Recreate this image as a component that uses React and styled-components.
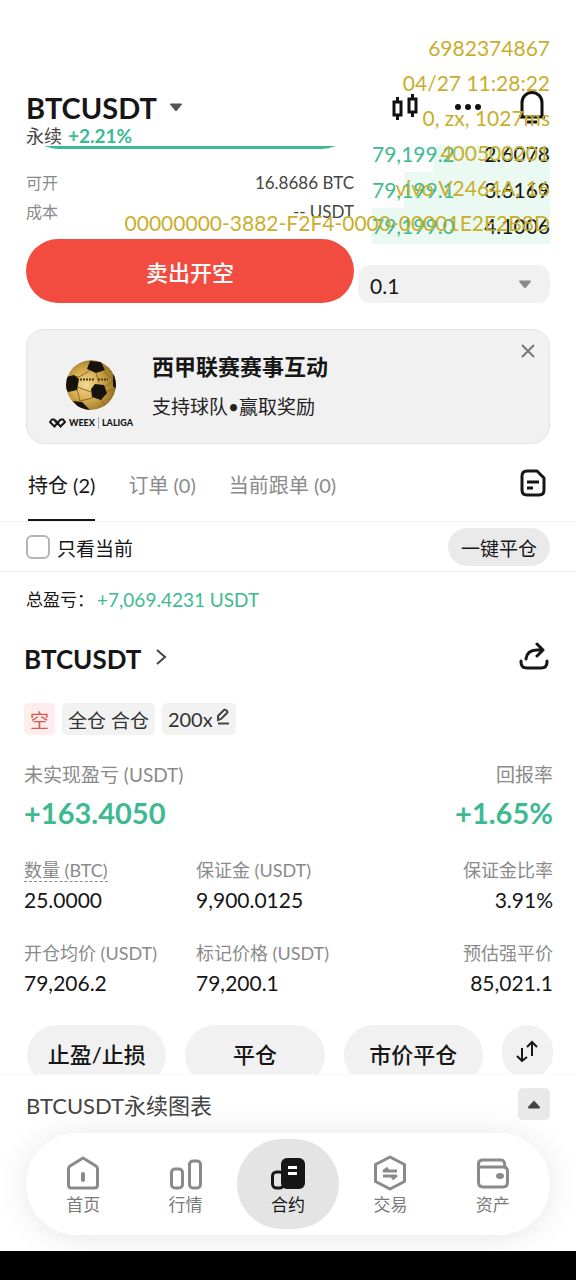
import { useState } from "react";
import styled, { createGlobalStyle } from "styled-components";

const GlobalStyle = createGlobalStyle`
  * {
    box-sizing: border-box;
  }
  body {
    margin: 0;
    background: #fff;
    font-family: Lato, "Noto Sans CJK SC", sans-serif;
    color: #161616;
  }
  button, select, input {
    font-family: inherit;
    color: inherit;
  }
  button {
    border: none;
    padding: 0;
    background: none;
    cursor: pointer;
  }
  svg {
    display: block;
  }
`;

const Page = styled.div`
  position: relative;
  display: flex;
  flex-direction: column;
  min-height: 100vh;
`;

const Header = styled.header`
  padding: 88px 26px 0;
`;

const HeaderRow = styled.div`
  display: flex;
  align-items: center;
  justify-content: space-between;
  height: 38px;
`;

const PairButton = styled.button`
  display: flex;
  align-items: center;
  gap: 12px;
  font-size: 29px;
  font-weight: 700;
`;

const HeaderTools = styled.div`
  display: flex;
  align-items: center;
  gap: 36px;
  padding-right: 4px;
`;

const SubRow = styled.div`
  display: flex;
  gap: 6px;
  height: 20px;
  line-height: 20px;
  font-size: 18px;
  color: #444;
`;

const Change = styled.span`
  font-size: 19px;
  font-weight: 700;
  color: #3dba92;
`;

const Watermark = styled.div`
  position: absolute;
  top: 30px;
  right: 26px;
  font-size: 21px;
  line-height: 35px;
  text-align: right;
  color: #c9ae2c;
  pointer-events: none;
`;

const Sheet = styled.main`
  flex: none;
`;

const Trade = styled.section`
  display: grid;
  grid-template-columns: 328fr 192fr;
  column-gap: 4px;
  padding: 0 26px;
`;

const OrderForm = styled.div`
  display: flex;
  flex-direction: column;
`;

// the buy button is scrolled up under the header, only its lower edge shows
const ScrolledOut = styled.div`
  display: flex;
  flex-direction: column;
  justify-content: flex-end;
  height: 3px;
  margin-bottom: 20px;
  overflow: hidden;
`;

const OrderButton = styled.button`
  flex: none;
  height: 64px;
  border-radius: 32px;
  font-size: 22px;
  font-weight: 500;
  color: #fff;
  background: ${({ $side }) => ($side === "buy" ? "#3dba92" : "#f24b40")};
`;

const FormLine = styled.div`
  display: flex;
  justify-content: space-between;
  height: 29px;
  line-height: 28px;
  font-size: 16px;
  color: #8a8a8a;
  &:last-of-type {
    margin-bottom: 12px;
  }
`;

const FormValue = styled.span`
  font-size: 17px;
  color: #444;
`;

const Book = styled.div`
  margin-top: -10px;
`;

const BookRow = styled.div`
  display: flex;
  justify-content: space-between;
  height: 36px;
  line-height: 36px;
  margin-left: 14px;
  font-size: 21px;
  background: linear-gradient(#eafaf2, #eafaf2) right bottom / ${({ $depth }) => $depth}% 100% no-repeat;
  &:first-child {
    background-size: ${({ $depth }) => $depth}% 26px;
  }
`;

const Price = styled.span`
  color: #3dba92;
`;

const StepBox = styled.div`
  display: flex;
  align-items: center;
  margin-top: 21px;
  height: 38px;
  padding-right: 18px;
  border-radius: 12px;
  background: #f1f1f1;
`;

const StepSelect = styled.select`
  flex: 1;
  min-width: 0;
  height: 38px;
  padding: 2px 0 0 12px;
  border: none;
  appearance: none;
  background: transparent;
  font-size: 21px;
`;

const Banner = styled.section`
  display: flex;
  align-items: flex-start;
  height: 115px;
  margin: 26px 26px 0;
  padding-left: 23px;
  border: 1px solid #e4e4e4;
  border-radius: 18px;
  background: #f1f1f1;
`;

const Sponsor = styled.div`
  display: flex;
  flex-direction: column;
  align-items: center;
  gap: 5px;
  width: 82px;
  padding-top: 29px;
`;

const SponsorNames = styled.div`
  display: flex;
  align-items: center;
  gap: 3px;
  font-size: 9px;
  line-height: 14px;
  font-weight: 900;
`;

const SponsorSplit = styled.i`
  width: 1px;
  height: 12px;
  background: #aaa;
`;

const BannerText = styled.div`
  flex: 1;
  padding: 18px 0 0 20px;
`;

const BannerTitle = styled.h2`
  margin: 0;
  font-size: 22px;
  line-height: 38px;
  font-weight: 700;
`;

const BannerSub = styled.p`
  margin: 0;
  font-size: 19px;
  line-height: 42px;
  color: #222;
`;

const CloseButton = styled.button`
  padding: 14px 14px 0 0;
`;

const Tabs = styled.nav`
  display: flex;
  align-items: center;
  gap: 33px;
  height: 78px;
  padding: 0 28px;
  border-bottom: 1px solid #f1f1f1;
`;

const Tab = styled.button`
  height: 77px;
  padding-top: 6px;
  font-size: 20px;
  color: ${({ $active }) => ($active ? "#161616" : "#8a8a8a")};
  border-bottom: 2px solid ${({ $active }) => ($active ? "#161616" : "transparent")};
`;

const HistoryButton = styled.button`
  margin-left: auto;
`;

const Filter = styled.div`
  display: flex;
  align-items: center;
  height: 50px;
  padding: 0 26px;
  border-bottom: 1px solid #f1f1f1;
`;

const CheckBox = styled.input`
  width: 24px;
  height: 24px;
  margin: 0 7px 0 0;
  border: 2px solid #b5b5b5;
  border-radius: 6px;
  appearance: none;
  &:checked {
    background: #161616;
  }
`;

const CheckLabel = styled.label`
  padding-top: 2px;
  font-size: 19px;
`;

const CloseAll = styled.button`
  width: 102px;
  height: 38px;
  margin-left: auto;
  padding-top: 2px;
  border-radius: 19px;
  font-size: 19px;
  background: #eaeaea;
`;

const Total = styled.p`
  display: flex;
  gap: 3px;
  margin: 0;
  padding: 0 26px;
  font-size: 17px;
  line-height: 56px;
`;

const TotalValue = styled.span`
  font-size: 19px;
  color: #3dba92;
`;

const Position = styled.section`
  padding: 12px 23px 0 24px;
`;

const PositionHead = styled.div`
  display: flex;
  align-items: center;
  justify-content: space-between;
  height: 38px;
  padding-right: 4px;
`;

const PositionName = styled.a`
  display: flex;
  align-items: center;
  gap: 14px;
  font-size: 26px;
  font-weight: 700;
  color: inherit;
  text-decoration: none;
`;

const Tags = styled.div`
  display: flex;
  gap: 7px;
  margin-top: 25px;
`;

const Tag = styled.span`
  display: flex;
  align-items: center;
  height: 32px;
  padding: 0 6px;
  border-radius: 5px;
  font-size: 19px;
  color: ${({ $short }) => ($short ? "#e5534b" : "#333")};
  background: ${({ $short }) => ($short ? "#fdeeed" : "#f2f2f2")};
`;

const EditButton = styled.button`
  display: flex;
  align-items: center;
  gap: 3px;
  font-size: 20px;
`;

const Summary = styled.div`
  display: flex;
  justify-content: space-between;
  margin-top: 26px;
`;

const Cell = styled.div`
  text-align: ${({ $end }) => ($end ? "right" : "left")};
`;

const SummaryLabel = styled.div`
  font-size: 19px;
  line-height: 28px;
  color: #8a8a8a;
`;

const SummaryValue = styled.div`
  font-size: 29px;
  font-weight: 700;
  line-height: 48px;
  color: #3dba92;
`;

const Stats = styled.div`
  display: grid;
  grid-template-columns: 172fr 200fr 157fr;
  row-gap: 23px;
  margin-top: 18px;
`;

const StatLabel = styled.div`
  font-size: 18px;
  line-height: 30px;
  color: #8a8a8a;
`;

const Hint = styled.span`
  display: inline-block;
  line-height: 22px;
  border-bottom: 1px dashed #8a8a8a;
`;

const StatValue = styled.div`
  font-size: 21px;
  line-height: 30px;
`;

const Actions = styled.div`
  display: grid;
  grid-template-columns: 1fr 1fr 1fr 51px;
  column-gap: 19px;
  height: 49px;
  margin-top: 27px;
  padding-left: 3px;
  overflow: hidden;
`;

const Action = styled.button`
  height: 60px;
  padding-bottom: 4px;
  border-radius: 30px;
  font-size: 22px;
  font-weight: 500;
  background: #f1f1f1;
`;

const SwapAction = styled(Action)`
  display: grid;
  place-items: center;
  height: 54px;
  padding: 0;
`;

const ChartBar = styled.div`
  display: flex;
  align-items: center;
  justify-content: space-between;
  height: 59px;
  padding: 0 26px;
  border-top: 1px solid #f8f8f8;
  font-size: 22px;
  color: #444;
`;

const ExpandButton = styled.button`
  display: grid;
  place-items: center;
  width: 32px;
  height: 32px;
  border-radius: 5px;
  background: #e9e9e9;
`;

const NavBar = styled.nav`
  display: grid;
  grid-template-columns: repeat(5, 1fr);
  margin: 0 26px 16px;
  padding: 6px;
  border-radius: 51px;
  background: #fff;
  box-shadow: 0 2px 32px rgba(0, 0, 0, 0.1);
`;

const NavItem = styled.a`
  display: flex;
  flex-direction: column;
  align-items: center;
  gap: 2px;
  height: 90px;
  padding-top: 16px;
  border-radius: 45px;
  font-size: 17px;
  line-height: 24px;
  text-decoration: none;
  color: ${({ $active }) => ($active ? "#161616" : "#7a7a7a")};
  background: ${({ $active }) => ($active ? "#e4e4e4" : "transparent")};
`;

const SystemBar = styled.div`
  flex: 1;
  min-height: 29px;
  background: #000;
`;

const Caret = ({ up, color }) => (
  <svg width="14" height="9" viewBox="0 0 14 9" fill={color}>
    <path d={up ? "M7 0.5L13 7Q13 8.5 12 8.5H2Q1 8.5 1 7Z" : "M1 1.5Q1 0.5 2 0.5H12Q13 0.5 13 1.5L8 7.6Q7 8.6 6 7.6Z"} />
  </svg>
);

const CandleIcon = () => (
  <svg width="26" height="28" viewBox="0 0 26 28" fill="none" stroke="#111" strokeWidth="3">
    <path d="M2 9H9V22H2ZM5.5 4V9M5.5 22V27M17 6H24V19H17ZM20.5 1V6M20.5 19V24" />
  </svg>
);

const MoreIcon = () => (
  <svg width="28" height="8" viewBox="0 0 28 8" fill="#111">
    <circle cx="4" cy="4" r="3" />
    <circle cx="14" cy="4" r="3" />
    <circle cx="24" cy="4" r="3" />
  </svg>
);

const BellIcon = () => (
  <svg width="28" height="34" viewBox="0 0 28 34" fill="none" stroke="#111" strokeWidth="3">
    <path d="M4 27V12.500a10 10 0 0 1 20 0V27" />
    <path d="M1 27H27" />
    <path d="M9 32H19" />
  </svg>
);

const BallIcon = () => (
  <svg width="52" height="52" viewBox="0 0 52 52">
    <defs>
      <radialGradient id="gold" cx="0.4" cy="0.5" r="0.62">
        <stop offset="0" stopColor="#f3dc94" />
        <stop offset="0.5" stopColor="#d3aa4e" />
        <stop offset="1" stopColor="#8f6a20" />
      </radialGradient>
      <clipPath id="ball">
        <circle cx="26" cy="26" r="25" />
      </clipPath>
    </defs>
    <g clipPath="url(#ball)">
      <circle cx="26" cy="26" r="25" fill="url(#gold)" />
      <path
        d="M24 12L14 18M12 28L26 33M39 13L47 20M31 14L34 24M12 30L15 42L28 39M42 32L50 30M36 40L40 46M14 18L8 17M48 22L40 28"
        fill="none"
        stroke="#8d6a24"
        strokeWidth="1"
      />
      <g fill="#17130c">
        <path d="M25 2L36 3L40 11L31 14L22 10Z" />
        <path d="M1 18L9 16L14 20L12 31L3 33L0 28Z" />
        <path d="M30 25L39 26L42 34L36 41L27 38L26 30Z" />
        <path d="M8 42L17 43L25 51L17 53Z" />
        <path d="M48 15L53 20V32L48 27Z" />
      </g>
      <path d="M15 20.500H29M33 20.500H43" stroke="#4a3812" strokeWidth="2" strokeDasharray="2 1" />
    </g>
  </svg>
);

const WeexIcon = () => (
  <svg width="17" height="10" viewBox="0 0 17 10" fill="none" stroke="#161616" strokeWidth="2">
    <path d="M8.5 6L5 1.5H3L1 4L5.5 8.5L11 2L12 1.5H14L16 4L11.5 8.5L6 2" />
  </svg>
);

const CloseIcon = () => (
  <svg width="14" height="14" viewBox="0 0 14 14" stroke="#777" strokeWidth="2">
    <path d="M1 1L13 13M13 1L1 13" />
  </svg>
);

const HistoryIcon = () => (
  <svg width="28" height="28" viewBox="0 0 28 28" fill="none" stroke="#161616" strokeWidth="3" strokeLinejoin="round">
    <path d="M7 2H17L24 9V21Q24 26 19 26H7Q2 26 2 21V7Q2 2 7 2Z" />
    <path d="M7 13H19M7 19H13" />
  </svg>
);

const ChevronIcon = () => (
  <svg width="12" height="20" viewBox="0 0 12 20" fill="none" stroke="#444" strokeWidth="2">
    <path d="M2 1L10 8L2 15" />
  </svg>
);

const ShareIcon = () => (
  <svg width="30" height="34" viewBox="0 0 30 34" fill="none" stroke="#161616" strokeWidth="3" strokeLinecap="round" strokeLinejoin="round">
    <path d="M2 19V20Q2 26 8 26H22Q28 26 28 20V19" />
    <path d="M7 17Q8 8 18 8H24M18 2L24 8L18 14" />
  </svg>
);

const EditIcon = () => (
  <svg width="14" height="22" viewBox="0 0 14 22" fill="none" stroke="#444" strokeWidth="2">
    <path d="M2 12V8L8 2Q9 1 10.500 2.500Q12 4 11 5L5 11Z" />
    <path d="M2 15.500H13" />
  </svg>
);

const SwapIcon = () => (
  <svg width="22" height="24" viewBox="0 0 22 24" fill="none" stroke="#161616" strokeWidth="2">
    <path d="M6 8V21M1 16L6 21L11 17M16 16V3M11 7L16 2L21 7" />
  </svg>
);

const HomeIcon = () => (
  <svg width="36" height="36" viewBox="0 0 36 36" fill="none" stroke="#8a8a8a" strokeWidth="3" strokeLinejoin="round">
    <path d="M3.500 14Q3.500 12 5 11L18 3L31 11Q32.500 12 32.500 14V30Q32.500 33 29.500 33H6.500Q3.500 33 3.500 30Z" />
    <path d="M18 19V25" strokeWidth="4" strokeLinecap="round" />
  </svg>
);

const MarketIcon = () => (
  <svg width="36" height="36" viewBox="0 0 36 36" fill="none" stroke="#8a8a8a" strokeWidth="3">
    <rect x="3.500" y="14" width="11" height="19" rx="3.500" />
    <rect x="21.500" y="6" width="11" height="27" rx="3.500" />
  </svg>
);

const ContractIcon = () => (
  <svg width="36" height="36" viewBox="0 0 36 36" fill="none">
    <rect x="2.500" y="17" width="11" height="16" rx="4" stroke="#161616" strokeWidth="3" />
    <rect x="11" y="3" width="24" height="31" rx="6" fill="#161616" />
    <path d="M18 12.500H27M18 18.500H27" stroke="#fff" strokeWidth="3" />
  </svg>
);

const TradeIcon = () => (
  <svg width="36" height="36" viewBox="0 0 36 36" fill="none" stroke="#8a8a8a" strokeWidth="3" strokeLinejoin="round">
    <path d="M18 2L32.500 9.500V26.500L18 34L3.500 26.500V9.500Z" />
    <path d="M25 16H12L16 13M11 21H24L20 24" strokeWidth="3" />
  </svg>
);

const WalletIcon = () => (
  <svg width="36" height="36" viewBox="0 0 36 36" fill="none" stroke="#8a8a8a" strokeWidth="3">
    <path d="M3.500 12V27Q3.500 32 8 32H28Q32.500 32 32.500 27V16Q32.500 12 28 12H3.500V9Q3.500 5 8 5H26Q30 5 30 12" />
    <ellipse cx="25" cy="21" rx="4" ry="3" fill="#8a8a8a" stroke="none" />
  </svg>
);

const watermark = [
  "6982374867",
  "04/27 11:28:22",
  "0, zx, 1027ms",
  "400500201",
  "vivo V2464A, 16",
  "00000000-3882-F2F4-0000-00001E2E2B8D",
];

const bids = [
  { price: "79,199.2", amount: "2.6078", depth: 66 },
  { price: "79,199.1", amount: "3.6169", depth: 82 },
  { price: "79,199.0", amount: "4.1006", depth: 100 },
];

const tabs = ["持仓 (2)", "订单 (0)", "当前跟单 (0)"];

const stats = [
  { label: "数量 (BTC)", value: "25.0000", hint: true },
  { label: "保证金 (USDT)", value: "9,900.0125" },
  { label: "保证金比率", value: "3.91%", end: true },
  { label: "开仓均价 (USDT)", value: "79,206.2" },
  { label: "标记价格 (USDT)", value: "79,200.1" },
  { label: "预估强平价", value: "85,021.1", end: true },
];

const navItems = [
  { label: "首页", Icon: HomeIcon },
  { label: "行情", Icon: MarketIcon },
  { label: "合约", Icon: ContractIcon, active: true },
  { label: "交易", Icon: TradeIcon },
  { label: "资产", Icon: WalletIcon },
];

const App = () => {
  const [tab, setTab] = useState(0);
  const [onlyCurrent, setOnlyCurrent] = useState(false);

  return (
    <Page lang="zh-CN">
      <GlobalStyle />
      <Header>
        <HeaderRow>
          <PairButton>
            BTCUSDT
            <Caret color="#555" />
          </PairButton>
          <HeaderTools>
            <button aria-label="K线">
              <CandleIcon />
            </button>
            <button aria-label="更多">
              <MoreIcon />
            </button>
            <button aria-label="提醒">
              <BellIcon />
            </button>
          </HeaderTools>
        </HeaderRow>
        <SubRow>
          永续 <Change>+2.21%</Change>
        </SubRow>
      </Header>

      <Sheet>
        <Trade>
          <OrderForm>
            <ScrolledOut>
              <OrderButton $side="buy" aria-label="买入开多" />
            </ScrolledOut>
            <FormLine>
              可开 <FormValue>16.8686 BTC</FormValue>
            </FormLine>
            <FormLine>
              成本 <FormValue>-- USDT</FormValue>
            </FormLine>
            <OrderButton $side="sell">卖出开空</OrderButton>
          </OrderForm>
          <Book>
            {bids.map((bid) => (
              <BookRow key={bid.price} $depth={bid.depth}>
                <Price>{bid.price}</Price>
                <span>{bid.amount}</span>
              </BookRow>
            ))}
            <StepBox>
              <StepSelect aria-label="深度">
                <option>0.1</option>
              </StepSelect>
              <Caret color="#8a8a8a" />
            </StepBox>
          </Book>
        </Trade>

        <Banner>
          <Sponsor>
            <BallIcon />
            <SponsorNames>
              <WeexIcon />
              WEEX
              <SponsorSplit />
              LALIGA
            </SponsorNames>
          </Sponsor>
          <BannerText>
            <BannerTitle>西甲联赛赛事互动</BannerTitle>
            <BannerSub>支持球队•赢取奖励</BannerSub>
          </BannerText>
          <CloseButton aria-label="关闭">
            <CloseIcon />
          </CloseButton>
        </Banner>

        <Tabs>
          {tabs.map((name, i) => (
            <Tab key={name} $active={i === tab} onClick={() => setTab(i)}>
              {name}
            </Tab>
          ))}
          <HistoryButton aria-label="历史">
            <HistoryIcon />
          </HistoryButton>
        </Tabs>

        <Filter>
          <CheckBox
            id="only-current"
            type="checkbox"
            checked={onlyCurrent}
            onChange={(e) => setOnlyCurrent(e.target.checked)}
          />
          <CheckLabel htmlFor="only-current">只看当前</CheckLabel>
          <CloseAll>一键平仓</CloseAll>
        </Filter>

        <Total>
          总盈亏： <TotalValue>+7,069.4231 USDT</TotalValue>
        </Total>

        <Position>
          <PositionHead>
            <PositionName href="#position">
              BTCUSDT
              <ChevronIcon />
            </PositionName>
            <button aria-label="分享">
              <ShareIcon />
            </button>
          </PositionHead>
          <Tags>
            <Tag $short>空</Tag>
            <Tag>全仓 合仓</Tag>
            <Tag>
              <EditButton>
                200x
                <EditIcon />
              </EditButton>
            </Tag>
          </Tags>
          <Summary>
            <Cell>
              <SummaryLabel>未实现盈亏 (USDT)</SummaryLabel>
              <SummaryValue>+163.4050</SummaryValue>
            </Cell>
            <Cell $end>
              <SummaryLabel>回报率</SummaryLabel>
              <SummaryValue>+1.65%</SummaryValue>
            </Cell>
          </Summary>
          <Stats>
            {stats.map(({ label, value, hint, end }) => (
              <Cell key={label} $end={end}>
                <StatLabel>{hint ? <Hint>{label}</Hint> : label}</StatLabel>
                <StatValue>{value}</StatValue>
              </Cell>
            ))}
          </Stats>
          <Actions>
            <Action>止盈/止损</Action>
            <Action>平仓</Action>
            <Action>市价平仓</Action>
            <SwapAction aria-label="反手">
              <SwapIcon />
            </SwapAction>
          </Actions>
        </Position>
      </Sheet>

      <ChartBar>
        BTCUSDT永续图表
        <ExpandButton aria-label="展开">
          <Caret up color="#444" />
        </ExpandButton>
      </ChartBar>
      <NavBar>
        {navItems.map(({ label, Icon, active }) => (
          <NavItem key={label} href="#nav" $active={active}>
            <Icon />
            {label}
          </NavItem>
        ))}
      </NavBar>
      <SystemBar />

      <Watermark>
        {watermark.map((line) => (
          <div key={line}>{line}</div>
        ))}
      </Watermark>
    </Page>
  );
};

export default App;
